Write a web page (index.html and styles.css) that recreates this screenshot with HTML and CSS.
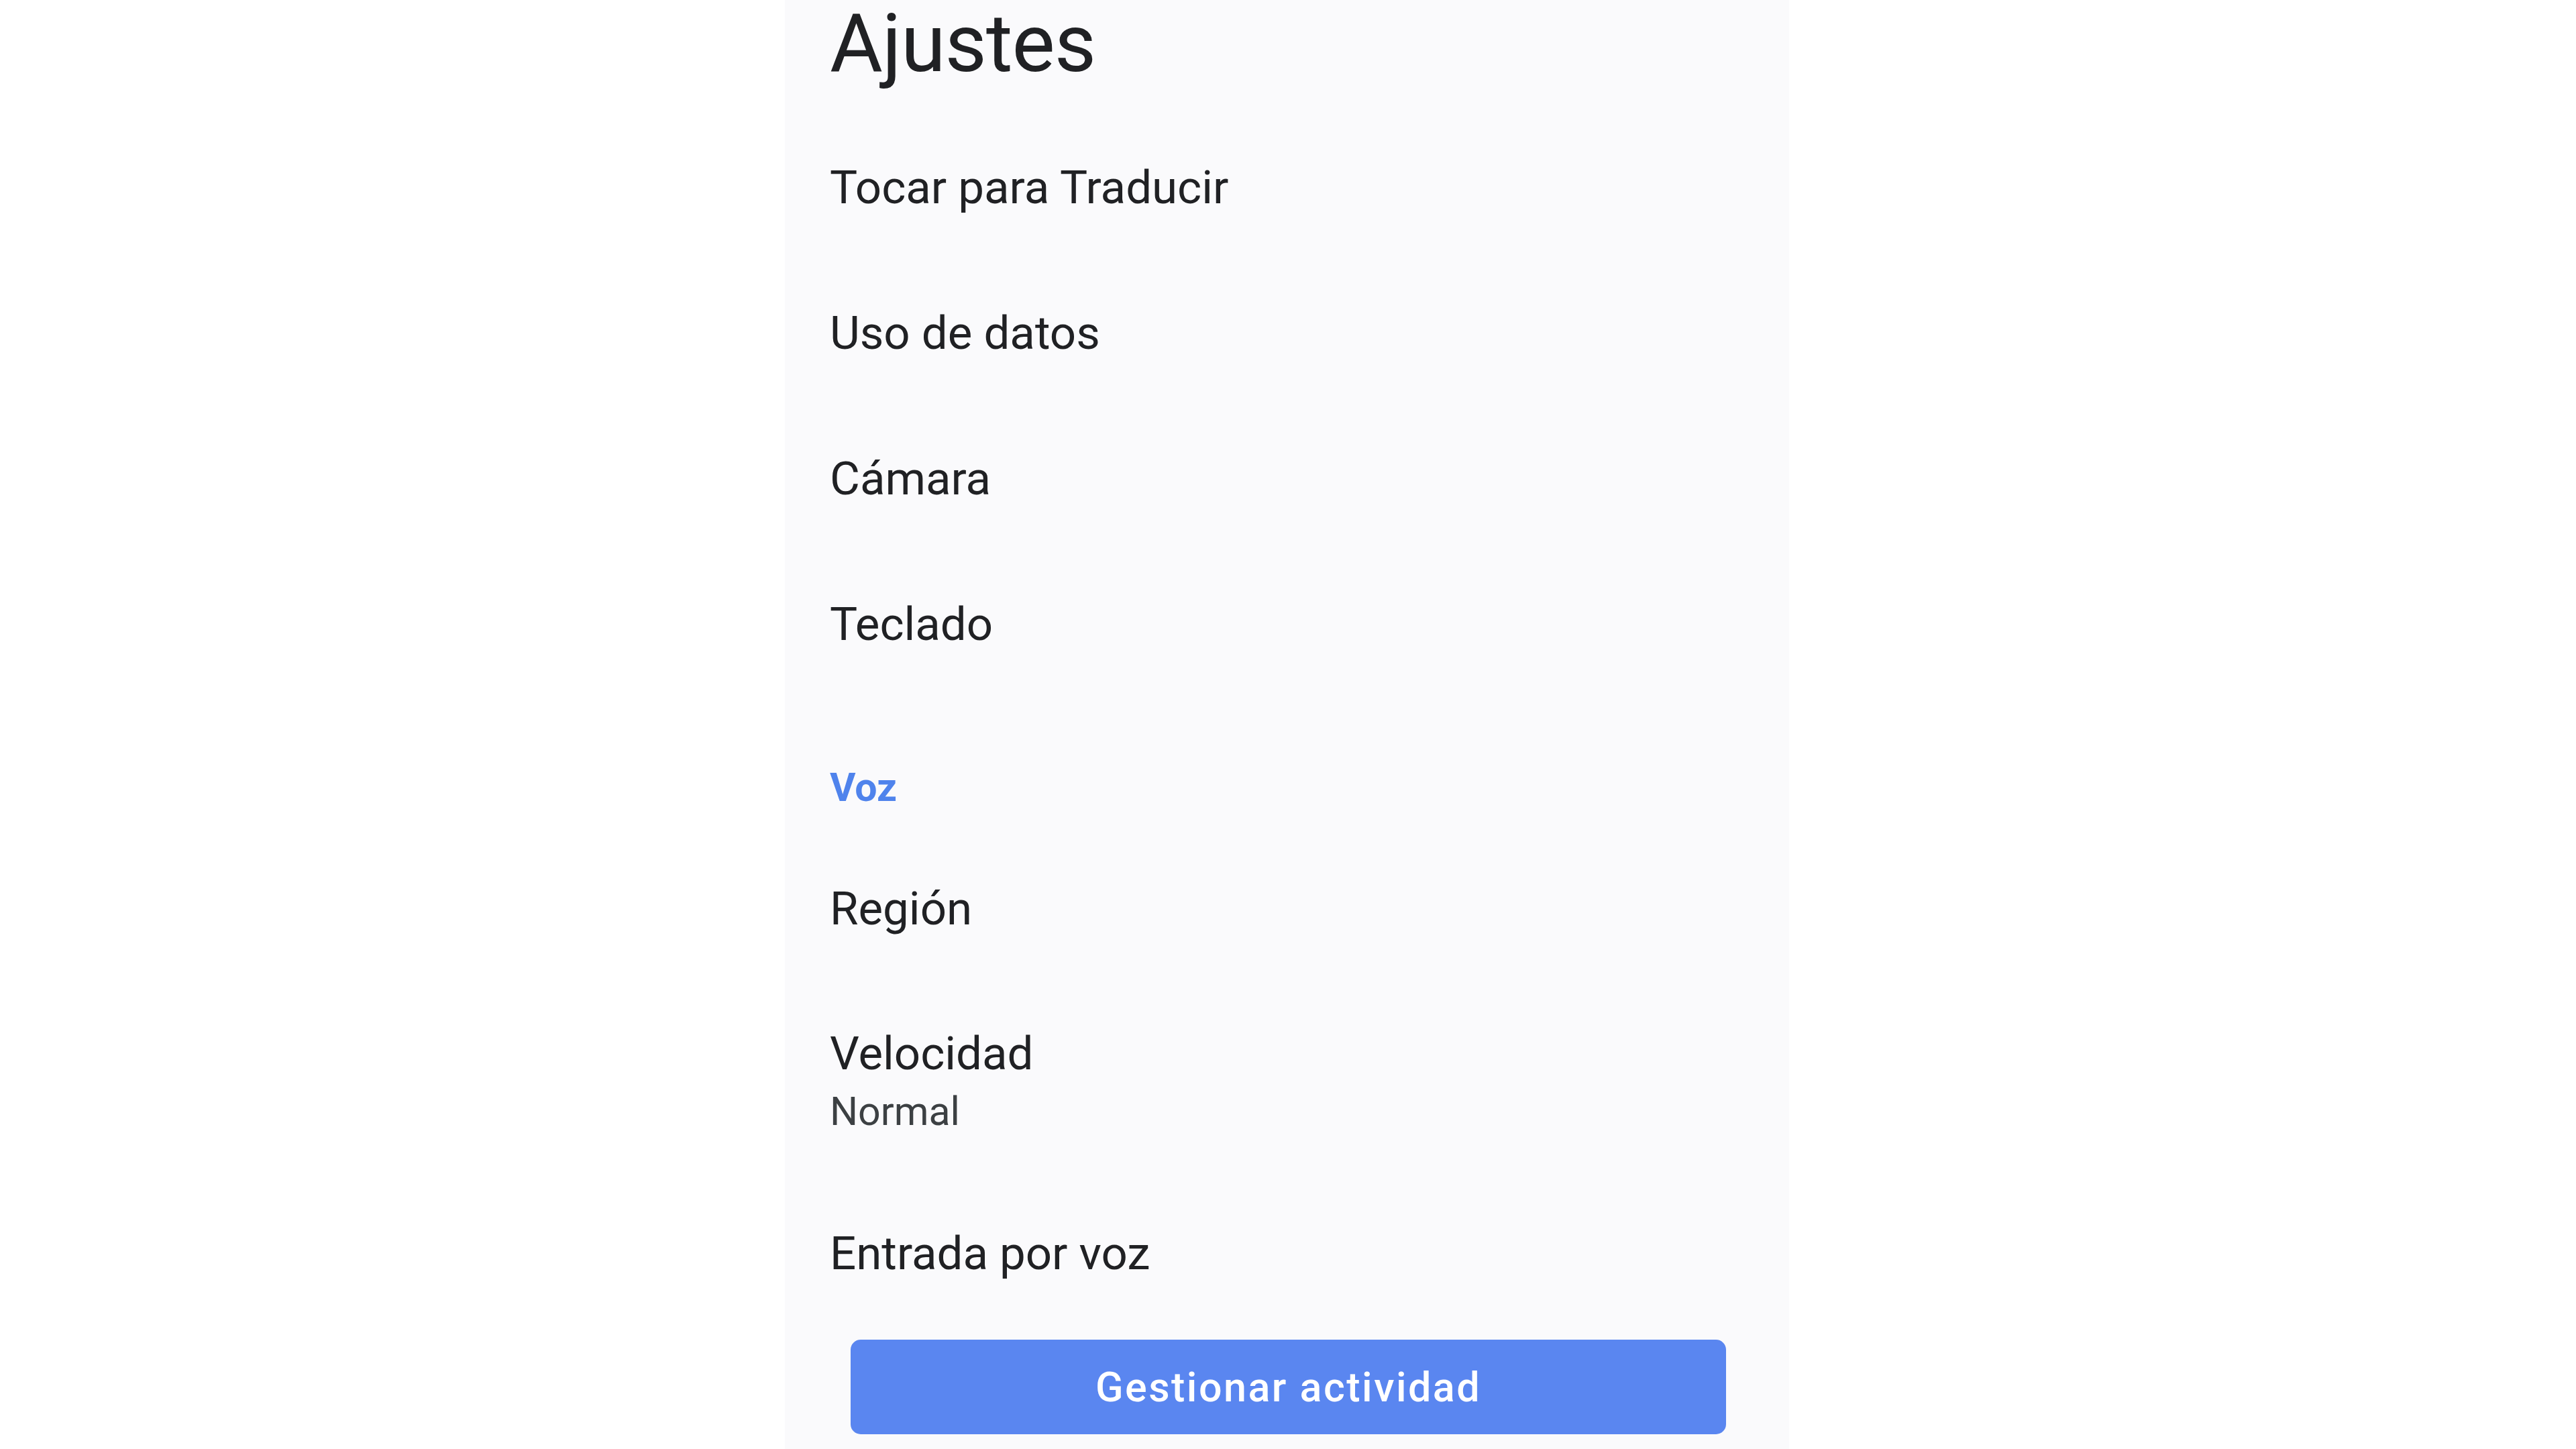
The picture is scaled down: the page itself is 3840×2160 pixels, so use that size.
FILE: index.html
```html
<!DOCTYPE html>
<html lang="es">
<head>
<meta charset="utf-8">
<title>Ajustes</title>
<link rel="stylesheet" href="styles.css">
</head>
<body>
<main class="panel">
  <h1 class="title">Ajustes</h1>
  <ul class="list">
    <li class="row">Tocar para Traducir</li>
    <li class="row">Uso de datos</li>
    <li class="row">Cámara</li>
    <li class="row">Teclado</li>
  </ul>
  <h2 class="section">Voz</h2>
  <ul class="list">
    <li class="row">Región</li>
    <li class="row row-two">
      <span class="row-title">Velocidad</span>
      <span class="row-sub">Normal</span>
    </li>
    <li class="row">Entrada por voz</li>
  </ul>
  <button class="action">Gestionar actividad</button>
</main>
</body>
</html>
```

FILE: styles.css
```css
html, body {
  margin: 0;
  padding: 0;
  background: #ffffff;
}

body {
  width: 3840px;
  height: 2160px;
  overflow: hidden;
  font-family: Roboto, "Noto Sans", sans-serif;
  color: #202124;
}

.panel {
  margin-left: 1170px;
  width: 1497px;
  height: 2160px;
  box-sizing: border-box;
  padding-left: 67px;
  background: #fafafc;
  display: flex;
  flex-direction: column;
}

.title {
  margin: 0 0 41px 0;
  font-size: 121px;
  line-height: 130px;
  font-weight: 400;
  letter-spacing: -1px;
}

.list {
  list-style: none;
  margin: 0;
  padding: 0;
}

.row {
  font-size: 69px;
  line-height: 217px;
  height: 217px;
}

.row-two {
  height: auto;
  line-height: normal;
  padding: 68px 0 57px 0;
  display: flex;
  flex-direction: column;
}

.row-title {
  line-height: 80px;
}

.row-sub {
  font-size: 59px;
  line-height: 92px;
  color: #3c4043;
}

.section {
  margin: 0;
  padding: 95px 0 32px 0;
  font-size: 59px;
  line-height: 80px;
  font-weight: 700;
  color: #4f83ec;
}

.action {
  margin: 20px 0 0 31px;
  width: 1305px;
  height: 141px;
  border: none;
  border-radius: 15px;
  background: #5a86f0;
  color: #ffffff;
  font-family: Roboto, "Noto Sans", sans-serif;
  font-size: 61px;
  font-weight: 500;
  letter-spacing: 2.5px;
  display: flex;
  align-items: center;
  justify-content: center;
  padding: 0;
}
```
